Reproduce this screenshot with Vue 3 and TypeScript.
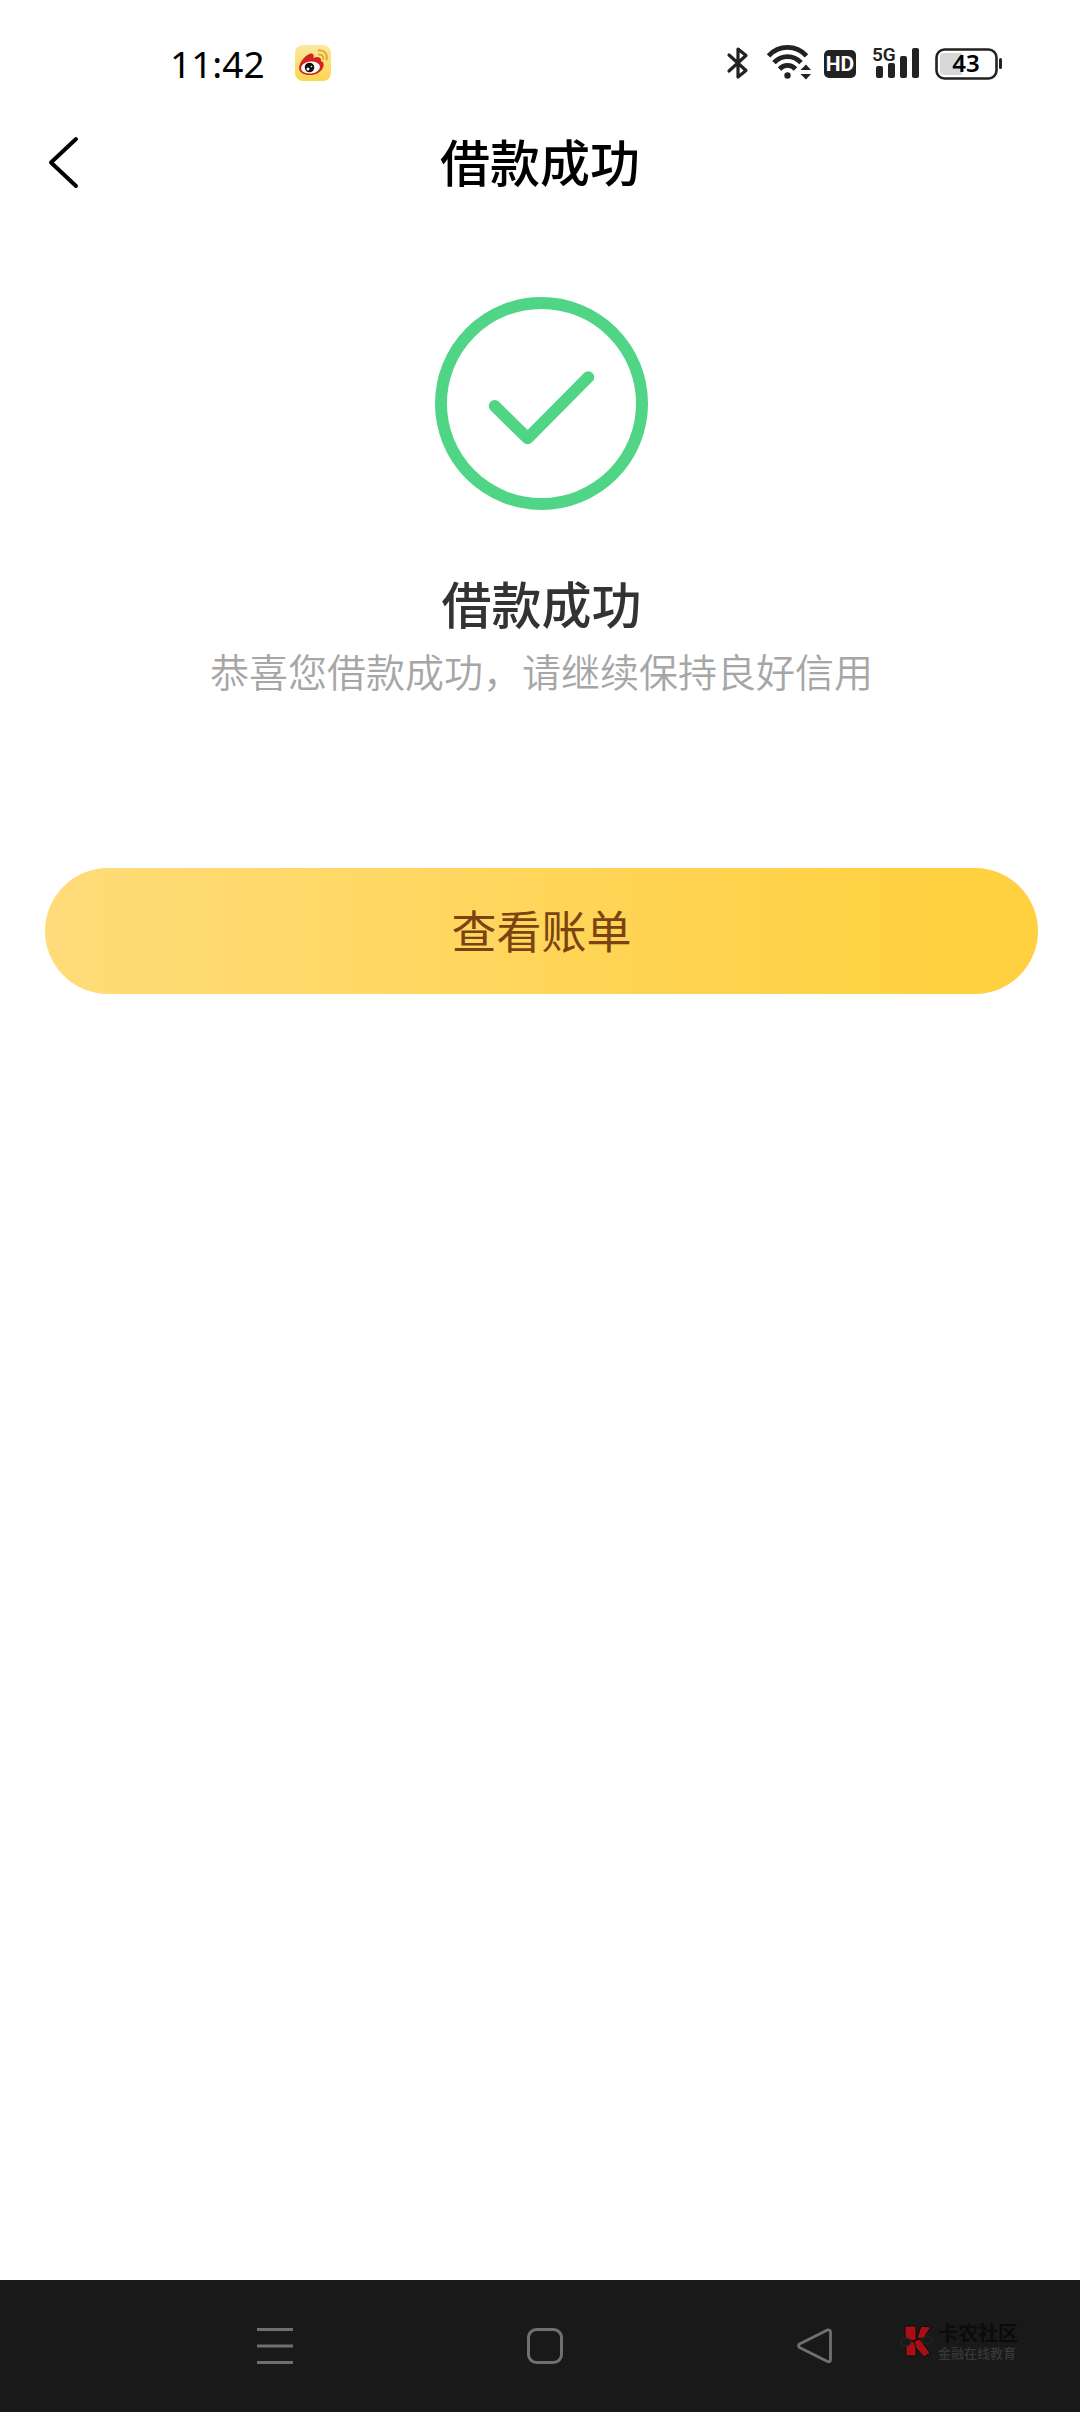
<script setup lang="ts">
import { ref } from 'vue'

const time = ref('11:42')
const battery = ref(43)
const title = '借款成功'
const message = '恭喜您借款成功，请继续保持良好信用'
</script>

<template>
  <div class="screen">
    <div class="status">
      <div class="status-left">
        <span class="time">{{ time }}</span>
        <svg class="weibo" width="36" height="36" viewBox="0 0 36 36" aria-hidden="true">
          <defs>
            <linearGradient id="weiboBg" x1="0" y1="0" x2="0" y2="1">
              <stop offset="0" stop-color="#fbe9a0" />
              <stop offset="1" stop-color="#fbd54f" />
            </linearGradient>
          </defs>
          <rect width="36" height="36" rx="8" fill="url(#weiboBg)" />
          <path d="M4 23C4 17 12 8.500 16 8.500C19 8.500 19 11 18.500 13C22 11.500 26.500 11.500 26 16C28.500 17 29.500 19 28 22.500C26 27.500 20.500 30 15 30C9 30 4 27.500 4 23Z" fill="#d5231c" />
          <ellipse cx="15.500" cy="22.500" rx="9.500" ry="6" fill="#fff" transform="rotate(-7 15.500 22.500)" />
          <circle cx="14.500" cy="22.500" r="4.800" fill="#111" />
          <circle cx="13" cy="24" r="1.500" fill="#fff" />
          <circle cx="16.500" cy="21.500" r="0.800" fill="#fff" />
          <path d="M23.500 5.500C29 4.500 33 9 31.500 14.500M24 9.500C27 9 29 11.500 28 14" fill="none" stroke="#eaa52f" stroke-width="2" stroke-linecap="round" />
        </svg>
      </div>
      <div class="status-right">
        <svg width="28" height="36" viewBox="0 0 28 36" aria-hidden="true">
          <path d="M4 10L21 25.500L13 32V4L21 10.500L4 26" fill="none" stroke="#222" stroke-width="3.200" stroke-linejoin="round" stroke-linecap="round" />
        </svg>
        <svg width="46" height="36" viewBox="0 0 46 36" aria-hidden="true">
          <g fill="none" stroke="#222" stroke-width="4.800">
            <path d="M3.500 10.800C14 -0.400 31 -0.400 41.500 10.800" />
            <path d="M9 17.600C16.500 9.600 28.500 9.600 36 17.600" />
            <path d="M14.500 24C19 19.200 26 19.200 30.500 24" />
          </g>
          <circle cx="22.500" cy="30.500" r="3.200" fill="#222" />
          <path d="M35.500 25L41 19.500L46 25ZM35.500 29L41 34.500L46 29Z" fill="#222" />
        </svg>
        <svg width="34" height="36" viewBox="0 0 34 36" aria-label="HD">
          <rect x="1" y="5" width="32" height="28" rx="5" fill="#222" />
          <text x="17" y="26" text-anchor="middle" class="hd">HD</text>
        </svg>
        <svg class="signal" width="54" height="36" viewBox="0 0 54 36" aria-label="5G">
          <text x="3" y="16" class="net">5G</text>
          <g fill="#222">
            <rect x="7" y="21" width="7" height="12" rx="2" />
            <rect x="19" y="18" width="7" height="15" rx="2" />
            <rect x="31" y="11" width="7" height="22" rx="2" />
            <rect x="43" y="3" width="7" height="30" rx="2" />
          </g>
        </svg>
        <svg width="67" height="36" viewBox="0 0 67 36" aria-label="Battery">
          <rect x="1.500" y="4.500" width="60" height="29" rx="8" fill="#fff" stroke="#222" stroke-width="2.600" />
          <path d="M27 8H9A4 4 0 0 0 5 12V26A4 4 0 0 0 9 30H27Z" fill="#d8d8d8" />
          <rect x="64" y="13" width="3" height="11" rx="1.500" fill="#222" />
          <text x="31" y="27" text-anchor="middle" class="level">{{ battery }}</text>
        </svg>
      </div>
    </div>

    <header class="header">
      <button class="back" type="button" aria-label="返回">
        <svg width="32" height="54" viewBox="0 0 32 54">
          <path d="M29 4L4 27.500L29 51" fill="none" stroke="#000" stroke-width="4" stroke-linecap="round" stroke-linejoin="round" />
        </svg>
      </button>
      <h1 class="title">{{ title }}</h1>
    </header>

    <main class="content">
      <svg class="result" width="213" height="213" viewBox="0 0 214 214" aria-hidden="true">
        <g fill="none" stroke="#4fd585" stroke-width="12">
          <circle cx="107" cy="107" r="101" />
          <path d="M60 109.500L93 142L154 80.500" stroke-linecap="round" stroke-linejoin="round" />
        </g>
      </svg>
      <h2 class="result-title">{{ title }}</h2>
      <p class="message">{{ message }}</p>
      <button class="primary" type="button">查看账单</button>
    </main>

    <nav class="nav">
      <button type="button" aria-label="菜单">
        <svg width="36" height="36" viewBox="0 0 36 36">
          <path d="M0 1.500H36M0 18H36M0 34.500H36" stroke="#707070" stroke-width="3" />
        </svg>
      </button>
      <button type="button" aria-label="主页">
        <svg width="36" height="36" viewBox="0 0 36 36">
          <rect x="1.500" y="1.500" width="33" height="33" rx="8" fill="none" stroke="#707070" stroke-width="3" />
        </svg>
      </button>
      <button type="button" aria-label="后退">
        <svg width="36" height="36" viewBox="0 0 36 36">
          <path d="M2.500 16L30.500 2Q33.500 1.500 33.500 4.500V31.500Q33.500 34.500 30.500 33.500L2.500 19.500Q0.500 17.800 2.500 16Z" fill="none" stroke="#707070" stroke-width="2.800" stroke-linejoin="round" />
        </svg>
      </button>
      <div class="brand">
        <svg width="34" height="34" viewBox="0 0 34 34" aria-hidden="true">
          <g fill="#a80f14" stroke="#0c0c0c" stroke-width="1">
            <path d="M5 2H16V16L12 17L5 13Z" />
            <path d="M21 2L31 3L23 15L17 14Z" />
            <path d="M12 17L16 20V32H6V23Z" />
            <path d="M14 17L20 15L30 29L24 33L16 24Z" />
          </g>
          <ellipse cx="6" cy="18" rx="5" ry="4" fill="#191919" stroke="#2b2b2b" />
          <ellipse cx="27" cy="16" rx="5" ry="4" fill="#191919" stroke="#2b2b2b" />
        </svg>
        <div class="brand-text">
          <span class="brand-name">卡农社区</span>
          <span class="brand-sub">金融在线教育</span>
        </div>
      </div>
    </nav>
  </div>
</template>

<style>
body {
  margin: 0;
  background: #fff;
}
</style>

<style scoped>
.screen {
  display: flex;
  flex-direction: column;
  min-height: 100vh;
  background: #fff;
  font-family: "Noto Sans CJK SC", sans-serif;
}

button {
  padding: 0;
  border: 0;
  background: none;
  font-family: inherit;
  cursor: pointer;
}

svg {
  display: block;
}

.status {
  display: flex;
  align-items: center;
  justify-content: space-between;
  height: 38px;
  padding: 44px 78px 0 170px;
}

.status-left {
  display: flex;
  align-items: center;
  gap: 30px;
}

.time {
  padding-top: 2px;
  font-family: "Noto Sans", sans-serif;
  font-size: 37px;
  line-height: 36px;
  color: #000;
}

.status-right {
  display: flex;
  align-items: center;
  gap: 12px;
}

.signal {
  overflow: visible;
}

.hd {
  font: 700 21px Roboto, sans-serif;
  fill: #fff;
}

.net {
  font: 600 19px Roboto, sans-serif;
  fill: #222;
}

.level {
  font: 600 24px "Noto Sans", sans-serif;
  fill: #000;
}

.header {
  display: grid;
  grid-template-columns: 120px 1fr 120px;
  align-items: center;
  height: 160px;
}

.back {
  justify-self: start;
  padding-left: 47px;
}

.title {
  margin: 0;
  padding-bottom: 4px;
  font-size: 50px;
  font-weight: 500;
  line-height: 64px;
  text-align: center;
  color: #000;
}

.content {
  display: flex;
  flex: 1;
  flex-direction: column;
  align-items: center;
  padding: 55px 42px 0 45px;
}

.result-title {
  margin: 60px 0 0;
  font-size: 50px;
  font-weight: 500;
  line-height: 64px;
  color: #333;
}

.message {
  margin: 8px 0 0;
  font-size: 39px;
  font-weight: 350;
  line-height: 56px;
  color: #a6a6a6;
}

.primary {
  width: 100%;
  height: 126px;
  margin-top: 170px;
  padding-bottom: 2px;
  border-radius: 63px;
  background: linear-gradient(90deg, #ffdc7a, #ffd040 90%);
  font-size: 45px;
  line-height: 64px;
  color: #7a4312;
}

.nav {
  position: relative;
  display: flex;
  align-items: center;
  height: 132px;
  padding: 0 130px 0 140px;
  background: #191919;
}

.nav button {
  display: flex;
  flex: 1;
  justify-content: center;
}

.brand {
  position: absolute;
  top: 41px;
  right: 62px;
  display: flex;
  align-items: center;
  gap: 4px;
}

.brand-text {
  display: flex;
  flex-direction: column;
}

.brand-name {
  font-size: 20px;
  font-weight: 700;
  line-height: 24px;
  color: #0b0b0b;
}

.brand-sub {
  font-size: 13px;
  font-weight: 500;
  line-height: 16px;
  color: #383838;
}
</style>
